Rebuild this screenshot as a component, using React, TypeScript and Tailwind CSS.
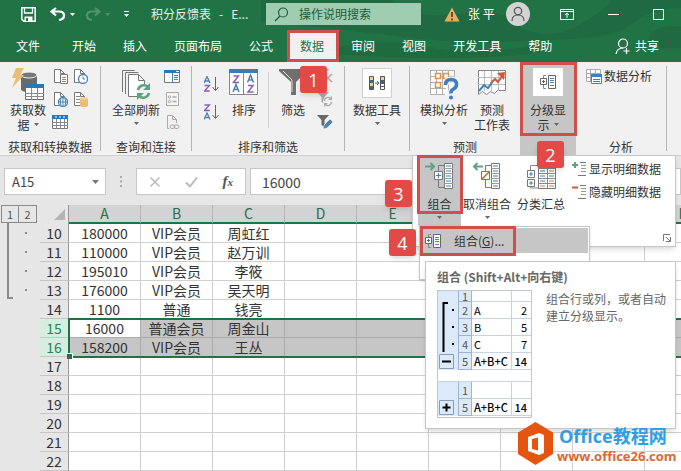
import React, { useState } from 'react';
import clsx from 'clsx';

const tabs = ['文件', '开始', '插入', '页面布局', '公式', '数据', '审阅', '视图', '开发工具', '帮助'];

const columns = ['A', 'B', 'C', 'D', 'E', 'F', 'G', 'H', 'I'];

const rows = [
  { id: 10, cells: ['180000', 'VIP会员', '周虹红'] },
  { id: 11, cells: ['110000', 'VIP会员', '赵万训'] },
  { id: 12, cells: ['195010', 'VIP会员', '李筱'] },
  { id: 13, cells: ['176000', 'VIP会员', '吴天明'] },
  { id: 14, cells: ['1100', '普通', '钱亮'] },
  { id: 15, cells: ['16000', '普通会员', '周金山'], selected: true },
  { id: 16, cells: ['158200', 'VIP会员', '王丛'], selected: true },
  { id: 17, cells: [] },
  { id: 18, cells: [] },
  { id: 19, cells: [] },
  { id: 20, cells: [] },
  { id: 21, cells: [] },
  { id: 22, cells: [] },
];

type IconProps = {
  w?: number;
  h?: number;
  children: React.ReactNode;
  className?: string;
};

function Icon({ w = 16, h = 16, children, className }: IconProps) {
  return (
    <svg
      width={w}
      height={h}
      viewBox={`0 0 ${w} ${h}`}
      fill="none"
      aria-hidden="true"
      className={clsx('shrink-0', className)}
    >
      {children}
    </svg>
  );
}

function Caret({ className = 'text-[#666]' }: { className?: string }) {
  return (
    <Icon w={5} h={3} className={className}>
      <path d="M0 0h5L2.5 3z" fill="currentColor" />
    </Icon>
  );
}

/* ---------- ribbon icons ---------- */

function GetDataIcon() {
  return (
    <Icon w={34} h={34}>
      <path d="M10 7v14c0 2 3 3 7 3s9-1 9-3V7z" fill="#6a6a6a" />
      <ellipse cx="18" cy="7" rx="8" ry="3" fill="#777" stroke="#f1f1f1" />
      <path d="M5 0h8L9 7h4L1 20l4-10H1z" fill="#e9bd76" />
      <path d="M14.5 16.5h18v15h-18z" fill="#fff" stroke="#666" />
      <path d="M14 16h19v4H14z" fill="#2e75b6" />
      <path d="M14 25.5h19M14 28.5h19M20.5 20v12M26.5 20v12" stroke="#8a8a8a" />
    </Icon>
  );
}

function PageIcon({ kind }: { kind: 'text' | 'clock' | 'globe' | 'database' }) {
  return (
    <Icon>
      <path d="M2.5 1.5h6l4 4v9h-10z" fill="#fff" stroke="#777" />
      <path d="M8.500 1.500v4h4" stroke="#777" />
      {kind === 'text' && (
        <>
          <path d="M8.500 6.500h7v9h-7z" fill="#fff" stroke="#777" />
          <path d="M10 9.500h4M10 11.500h4M10 13.500h4" stroke="#888" />
        </>
      )}
      {kind === 'clock' && (
        <>
          <circle cx="11" cy="11" r="4.500" fill="#fff" stroke="#4a82b8" strokeWidth="1.300" />
          <path d="M11 8.500V11h2" stroke="#4a82b8" />
        </>
      )}
      {kind === 'globe' && (
        <>
          <circle cx="11" cy="11" r="4.500" fill="#fff" stroke="#4a82b8" strokeWidth="1.300" />
          <path d="M6.500 11h9M11 6.500v9M9 7.500q-1.500 3.500 0 7M13 7.500q1.500 3.500 0 7" stroke="#4a82b8" />
        </>
      )}
      {kind === 'database' && (
        <>
          <path d="M4 5.500h4M4 8.500h4M4 11.500h4" stroke="#888" />
          <path d="M8 7.500v7c0 2 8 2 8 0v-7z" fill="#e9bd76" />
          <ellipse cx="12" cy="7.500" rx="4" ry="1.500" fill="#f1cf95" />
        </>
      )}
    </Icon>
  );
}

function TableIcon() {
  return (
    <Icon>
      <path d="M.5 1.500h15v13H.5z" fill="#fff" stroke="#777" />
      <path d="M0 1h16v4H0z" fill="#2e75b6" />
      <path d="M0 8.500h16M0 11.500h16M4.500 5v10M8.500 5v10M12.500 5v10" stroke="#888" />
      <path d="M3 3h2M7 3h2M11 3h2" stroke="#fff" />
    </Icon>
  );
}

function RefreshIcon() {
  return (
    <Icon w={30} h={32}>
      <path d="M1.500 24V2.500h12M4.500 26V4.500h13" stroke="#777" />
      <path d="M7.500 6.500h10l6 6v16h-16z" fill="#fff" stroke="#777" />
      <path d="M17.500 6.500v6h6" stroke="#777" />
      <circle cx="22.500" cy="23.500" r="7.500" fill="#f1f1f1" />
      <path d="M17 22a6 6 0 0 1 10-3M28 25a6 6 0 0 1-10 3" stroke="#5da282" strokeWidth="2.600" />
      <path d="M29 15v7h-7zM16 32v-7h7z" fill="#5da282" />
    </Icon>
  );
}

function QueryPaneIcon() {
  return (
    <Icon>
      <path d="M.5 2.500h15v12H.5z" fill="#fff" stroke="#777" />
      <path d="M0 2h16v3H0z" fill="#2e75b6" />
      <path d="M8.500 5v9M10 7.500h4M10 9.500h4M10 11.500h4" stroke="#4a82b8" />
      <path d="M12 3.500h3" stroke="#fff" />
    </Icon>
  );
}

function PropertiesIcon() {
  return (
    <Icon>
      <path d="M2.500 1.500h12v13h-12z" fill="#f4f4f4" stroke="#aaa" />
      <circle cx="5.500" cy="6" r="1.200" stroke="#aaa" />
      <circle cx="5.500" cy="10.500" r="1.200" stroke="#aaa" />
      <path d="M8.500 6h4M8.500 10.500h4" stroke="#aaa" strokeWidth="1.500" />
    </Icon>
  );
}

function LinkPageIcon() {
  return (
    <Icon>
      <path d="M5 14.500H3.500v-13h5l4 4V9M8.500 1.500v4h4" stroke="#aaa" />
      <rect x="6" y="11" width="5" height="3.500" rx="1.700" stroke="#aaa" />
      <rect x="10" y="11" width="5" height="3.500" rx="1.700" stroke="#aaa" />
    </Icon>
  );
}

/* the A and Z strokes of the sort icons */
function SortIcon({ desc }: { desc?: boolean }) {
  const a = <path d="M0 7L3 .5 6 7M1.200 5h3.600" stroke="#4a82b8" strokeWidth="1.300" />;
  const z = <path d="M.5 1h5L.5 6.500h5.200" stroke="#8b5fb0" strokeWidth="1.300" />;
  return (
    <Icon w={16} h={16}>
      <g>{desc ? z : a}</g>
      <g transform="translate(0 8.500)">{desc ? a : z}</g>
      <path d="M11.500 1v13M8.500 11l3 3.500 3-3.500" stroke="#666" />
    </Icon>
  );
}

function SortDialogIcon() {
  return (
    <Icon w={30} h={28}>
      <path d="M.5 2.500h14v24H.5zM14.500 2.500h14v24h-14z" fill="#fff" stroke="#888" />
      <path d="M0 1h29v4H0z" fill="#3f7cae" />
      <path d="M4.500 8h5l-5 6.500h5.500M19 17.500h5L19 24h5.500" stroke="#8b5fb0" strokeWidth="1.500" />
      <path d="M4 24l3-7.500 3 7.500M5 21.500h4M18.500 14.500l3-7.500 3 7.500M19.500 12h4" stroke="#4a82b8" strokeWidth="1.500" />
    </Icon>
  );
}

function FunnelIcon() {
  return (
    <Icon w={30} h={28}>
      <path d="M1 1h28v2L18 14v13h-5V14L1 3z" fill="#707070" />
      <path d="M5 3l9 9v12" stroke="#ddd" />
    </Icon>
  );
}

function SmallFunnelIcon({ kind }: { kind: 'clear' | 'reapply' | 'advanced' }) {
  const color = kind === 'advanced' ? '#666' : '#aaa';
  return (
    <Icon>
      <path d="M0 1h12L7.500 6v7l-3-2V6z" fill={color} />
      {kind === 'clear' && <path d="M7 6l8 8M15 6l-8 8" stroke="#aaa" strokeWidth="1.500" />}
      {kind === 'reapply' && (
        <>
          <circle cx="11" cy="10.500" r="5" fill="#f1f1f1" />
          <path d="M7.500 10a3.500 3.500 0 0 1 6-2.500M14.500 11a3.500 3.500 0 0 1-6 2.500" stroke="#aaa" strokeWidth="1.400" />
          <path d="M15 5v4h-4zM7 16v-4h4z" fill="#aaa" />
        </>
      )}
      {kind === 'advanced' && (
        <path d="M6 15l1-4 6-6 3 3-6 6z" fill="#4a82b8" stroke="#f1f1f1" strokeWidth=".6" />
      )}
    </Icon>
  );
}

function DataToolsIcon() {
  return (
    <Icon w={18} h={16}>
      <path d="M1.500 1.500h4v13h-4z" fill="#3f6785" stroke="#555" />
      <path d="M2 2h3v3H2zM2 8h3v3H2z" fill="#ecd28e" />
      <path d="M7 8h4M9 6l2 2-2 2" stroke="#3f6785" />
      <path d="M12.500 1.500h4v13h-4z" fill="#fff" stroke="#555" />
      <path d="M13 2h3v3h-3z" fill="#ecd28e" />
      <path d="M13 5h3v4h-3z" fill="#3f6785" />
      <path d="M12 11.500h5" stroke="#555" />
    </Icon>
  );
}

function WhatIfIcon() {
  return (
    <Icon w={30} h={32}>
      <path d="M1 2h25v24H1z" fill="#fff" />
      <path d="M1.500 2v24M7.500 2v24M13.500 2v24M19.500 2v24M25.500 2v12M1 2.500h25M1 8.500h25M1 14.500h25M1 20.500h16M1 26.500h15" stroke="#b0b0b0" />
      <path d="M6.500 5.500h5v5h-5zM14.500 5.500h5v5h-5zM6.500 14.500h5v5h-5z" fill="#fff" stroke="#dc9544" strokeWidth="1.500" />
      <path d="M16.500 17q0-5.500 5.500-5.500t5.500 5q0 3-3 4.500t-2.500 4.500" stroke="#f1f1f1" strokeWidth="6" />
      <path d="M16.500 17q0-5.500 5.500-5.500t5.500 5q0 3-3 4.500t-2.500 4.500" stroke="#3d80bd" strokeWidth="3.500" />
      <circle cx="22" cy="29.500" r="2" fill="#3d80bd" />
    </Icon>
  );
}

function ForecastIcon() {
  return (
    <Icon w={30} h={28}>
      <path d="M1.500 2.500h27v20l-8 0-3 3-4-2-4 3-4-3-4 3z" fill="#fff" stroke="#888" />
      <path d="M7.500 3v20M14.500 3v20M21.500 3v20M1 9.500h27M1 16.500h27" stroke="#bbb" />
      <path d="M2 23l5-6 4 3 5-7" stroke="#3d80bd" strokeWidth="2" />
      <path d="M14 15l4-4 3 3 5-7" stroke="#d0563c" strokeWidth="2" />
      <path d="M20 5l8-1-1 8z" fill="#d0563c" />
    </Icon>
  );
}

function OutlineIcon() {
  return (
    <Icon w={17} h={16}>
      <path d="M6 1.500H3.500V4M3.500 11v3.500H6" stroke="#888" />
      <path d="M.5 4.500h6v6h-6z" fill="#fff" stroke="#666" />
      <path d="M2 7.500h3M3.500 6v3" stroke="#3a6f9f" />
      <path d="M8.500 1.500h7v13h-7z" fill="#fff" stroke="#666" />
      <path d="M10 4.500h4M10 6.500h4M10 8.500h4M10 11.500h4" stroke="#4a82b8" />
    </Icon>
  );
}

function DataAnalysisIcon() {
  return (
    <Icon>
      <path d="M.5 1.500h14v12H.5z" fill="#fff" stroke="#aaa" />
      <path d="M0 5.500h15M0 9.500h6M4.500 1v12M9.500 1v4" stroke="#aaa" />
      <path d="M5.500 6.500h10v9h-10z" fill="#fff" stroke="#777" />
      <path d="M5 6h11v3H5z" fill="#3d80bd" />
      <path d="M7 11.500h7M7 13.500h7" stroke="#3d80bd" />
    </Icon>
  );
}

function GroupIcon({ ungroup }: { ungroup?: boolean }) {
  return (
    <Icon w={32} h={28}>
      <path d="M20 3.500h-5.500V9M14.500 18v7.500H20" stroke="#777" />
      <path d="M20.500 1.500h8v25h-8z" fill="#fff" stroke="#777" />
      <path d="M20 6.500h9M20 11.500h9M20 16.500h9M20 21.500h9" stroke="#999" />
      <path d="M22 4h5M22 9h5M22 14h5M22 19h5M22 24h5" stroke="#3d80bd" />
      {ungroup ? (
        <>
          <path d="M12 4.500H3M6.500 1L3 4.500 6.500 8" stroke="#5da282" strokeWidth="2" />
          <path d="M10.500 9.500h8v8h-8z" fill="#fff" stroke="#d0563c" />
          <path d="M11 17l7-7" stroke="#d0563c" strokeWidth="1.500" />
        </>
      ) : (
        <>
          <path d="M1 4.500h9M6.500 1L10 4.500 6.500 8" stroke="#5da282" strokeWidth="2" />
          <path d="M10.500 9.500h8v8h-8z" fill="#fff" stroke="#777" />
          <path d="M12 13.500h5M14.500 11v5" stroke="#3d80bd" />
        </>
      )}
    </Icon>
  );
}

function SubtotalIcon() {
  return (
    <Icon w={32} h={28}>
      <path d="M5.500 9V3.500H13M5.500 22v4H13" stroke="#888" />
      <path d="M13.500 1.500h17v25h-17z" fill="#fff" stroke="#777" />
      <path d="M13 6.500h17M13 11.500h17M13 16.500h17M13 21.500h17M22.500 1v26" stroke="#888" />
      <path d="M15 4h5M24 4h5M15 9h5M15 14h5M24 14h5M15 19h5" stroke="#3d80bd" />
      <path d="M24 9h5M15 24h5M24 24h5M24 19h5" stroke="#dc7c44" />
      <path d="M2.500 8.500h7v7h-7zM2.500 17.500h7v7h-7z" fill="#fff" stroke="#777" />
      <path d="M4 12h4M6 10v4M4 21h4M6 19v4" stroke="#3d80bd" />
    </Icon>
  );
}

function DetailIcon({ hide }: { hide?: boolean }) {
  return (
    <Icon>
      {hide ? (
        <path d="M1 3.500h6" stroke="#d0563c" strokeWidth="2" />
      ) : (
        <path d="M1 4h6M4 1v6" stroke="#5da282" strokeWidth="2" />
      )}
      <path d="M9 1.500h6M7 14.500h8" stroke="#777" />
      <path d="M10 4.500h5M10 7.500h5M10 10.500h5" stroke="#999" />
    </Icon>
  );
}

/* ---------- ribbon pieces ---------- */

type BigButtonProps = {
  icon: React.ReactNode;
  lines: string[];
  caret?: 'inline' | 'below';
  className?: string;
};

function BigButton({ icon, lines, caret, className }: BigButtonProps) {
  return (
    <button type="button" className={clsx('flex shrink-0 flex-col items-center leading-[15px]', className)}>
      <span className="flex h-[34px] items-start justify-center">{icon}</span>
      {lines.map((line, i) => (
        <span key={line} className="flex items-center gap-1 whitespace-nowrap">
          {line}
          {caret === 'inline' && i === lines.length - 1 && <Caret />}
        </span>
      ))}
      {caret === 'below' && (
        <span className="flex h-[13px] items-center">
          <Caret />
        </span>
      )}
    </button>
  );
}

type RibbonGroupProps = {
  label?: string;
  className?: string;
  children: React.ReactNode;
};

function RibbonGroup({ label, className, children }: RibbonGroupProps) {
  return (
    <div className={clsx('flex shrink-0 flex-col justify-between', className)}>
      <div className="flex items-start pt-0.5">{children}</div>
      {label && <div className="text-center leading-4">{label}</div>}
    </div>
  );
}

function IconButton({ label, children }: { label: string; children: React.ReactNode }) {
  return (
    <button type="button" aria-label={label} className="block">
      {children}
    </button>
  );
}

function Divider() {
  return <div className="mb-1 w-px shrink-0 bg-[#b5b5b5]" />;
}

function Ribbon() {
  return (
    <div className="flex h-[94px] overflow-hidden border-b border-[#d0d0d0] bg-[#f1f1f1] pt-1 text-[#333]">
      <RibbonGroup label="获取和转换数据" className="w-[100px]">
        <BigButton icon={<GetDataIcon />} lines={['获取数', '据']} caret="inline" className="ml-2 w-10" />
        <div className="ml-1 grid grid-cols-2 gap-x-1 gap-y-[7px]">
          <IconButton label="从文本"><PageIcon kind="text" /></IconButton>
          <IconButton label="最近使用的源"><PageIcon kind="clock" /></IconButton>
          <IconButton label="自网站"><PageIcon kind="globe" /></IconButton>
          <IconButton label="现有连接"><PageIcon kind="database" /></IconButton>
          <IconButton label="自表格"><TableIcon /></IconButton>
        </div>
      </RibbonGroup>
      <Divider />
      <RibbonGroup label="查询和连接" className="w-[90px]">
        <BigButton icon={<RefreshIcon />} lines={['全部刷新']} caret="below" className="ml-[11px] w-12" />
        <div className="ml-1 grid gap-y-[7px]">
          <IconButton label="查询"><QueryPaneIcon /></IconButton>
          <IconButton label="属性"><PropertiesIcon /></IconButton>
          <IconButton label="编辑链接"><LinkPageIcon /></IconButton>
        </div>
      </RibbonGroup>
      <Divider />
      <RibbonGroup label="排序和筛选" className="w-[152px]">
        <div className="flex gap-2 pl-3">
          <div className="grid content-start gap-y-3 pt-2">
            <IconButton label="升序"><SortIcon /></IconButton>
            <IconButton label="降序"><SortIcon desc /></IconButton>
          </div>
          <BigButton icon={<SortDialogIcon />} lines={['排序']} className="w-8" />
          <div className="mt-1 h-14 w-px bg-[#d0d0d0]" />
          <BigButton icon={<FunnelIcon />} lines={['筛选']} className="w-8" />
          <div className="grid gap-y-[7px]">
            <IconButton label="清除"><SmallFunnelIcon kind="clear" /></IconButton>
            <IconButton label="重新应用"><SmallFunnelIcon kind="reapply" /></IconButton>
            <IconButton label="高级"><SmallFunnelIcon kind="advanced" /></IconButton>
          </div>
        </div>
      </RibbonGroup>
      <Divider />
      <RibbonGroup className="w-16">
        <BigButton
          icon={
            <span className="flex size-[30px] items-center justify-center border border-[#d0d0d0] bg-white">
              <DataToolsIcon />
            </span>
          }
          lines={['数据工具']}
          caret="below"
          className="w-full"
        />
      </RibbonGroup>
      <Divider />
      <RibbonGroup label="预测" className="w-[110px]">
        <BigButton icon={<WhatIfIcon />} lines={['模拟分析']} caret="below" className="ml-[10px] w-12" />
        <BigButton icon={<ForecastIcon />} lines={['预测', '工作表']} className="ml-1.5 w-9" />
      </RibbonGroup>
      <RibbonGroup className="-mt-1 w-14 bg-[#c6c6c6] pt-1">
        <BigButton
          icon={
            <span className="flex h-7 w-[30px] items-center justify-center bg-white">
              <OutlineIcon />
            </span>
          }
          lines={['分级显', '示']}
          caret="inline"
          className="w-full"
        />
      </RibbonGroup>
      <RibbonGroup label="分析" className="w-[90px]">
        <button type="button" className="ml-[10px] flex items-center gap-0.5 leading-4">
          <DataAnalysisIcon />
          数据分析
        </button>
      </RibbonGroup>
      <Divider />
    </div>
  );
}

/* ---------- window header ---------- */

function TitleBar() {
  return (
    <div className="flex h-[30px] items-center pb-0.5 pl-[21px]">
      <button type="button" aria-label="保存">
        <Icon w={15} h={15}>
          <path d="M.8.800h13.400v13.400H2.800L.8 12.200z" stroke="#fff" strokeWidth="1.500" />
          <path d="M3.500 1v5h8V1" stroke="#fff" strokeWidth="1.300" />
          <path d="M3.500 9.500h8V14h-8z" fill="#fff" />
          <path d="M5 11h2v3H5z" fill="#217346" />
        </Icon>
      </button>
      <button type="button" aria-label="撤消" className="ml-3.5 flex items-center gap-1 text-white">
        <Icon w={16} h={14}>
          <path d="M6 1L1.500 4.500 6 8.500M2 4.500h7q5 0 5 4T9 13" stroke="currentColor" strokeWidth="2.200" />
        </Icon>
        <Caret className="text-white" />
      </button>
      <button type="button" aria-label="恢复" className="ml-2.5 flex items-center gap-1 text-[#4f936d]">
        <Icon w={16} h={14}>
          <path d="M10 1l4.500 3.500L10 8.500M14 4.500H7q-5 0-5 4T7 13" stroke="currentColor" strokeWidth="2.200" />
        </Icon>
        <Caret className="text-[#4f936d]" />
      </button>
      <button type="button" aria-label="自定义快速访问工具栏" className="ml-3.5 flex flex-col items-center gap-0.5 text-white">
        <span className="h-px w-[5px] bg-white" />
        <Caret className="text-white" />
      </button>
      <h1 className="ml-[22px] flex w-[115px] gap-2 whitespace-nowrap text-[#e2f0e8]">
        <span>积分反馈表</span>
        <span>-</span>
        <span>E...</span>
      </h1>
      <label className="flex h-[22px] w-[155px] items-center gap-2.5 bg-[#9fcdb1] pl-2">
        <Icon w={15} h={15}>
          <circle cx="9" cy="5.500" r="4.500" stroke="#1d5c3a" strokeWidth="1.200" />
          <path d="M6 9l-5 5" stroke="#1d5c3a" strokeWidth="1.300" />
        </Icon>
        <input
          type="text"
          aria-label="操作说明搜索"
          placeholder="操作说明搜索"
          className="w-full min-w-0 bg-transparent outline-none placeholder:text-[#1d5c3a]"
        />
      </label>
      <Icon w={16} h={15} className="ml-[23px]">
        <path d="M8 .5l7.500 14H.5z" fill="#e8ae58" />
        <path d="M8 5v5M8 11.500v2" stroke="#3c3c28" strokeWidth="1.600" />
      </Icon>
      <span className="ml-2 whitespace-nowrap text-white">张 平</span>
      <span className="ml-[11px] flex size-6 shrink-0 items-center justify-center rounded-full bg-[#d3d3d3]">
        <Icon w={14} h={16}>
          <circle cx="7" cy="5" r="3.700" stroke="#555" strokeWidth="1.200" />
          <path d="M1 15q0-6 6-6t6 6" stroke="#555" strokeWidth="1.200" />
        </Icon>
      </span>
      <div className="ml-auto flex items-center gap-[34px] pr-[17px]">
        <button type="button" aria-label="功能区显示选项">
          <Icon w={14} h={11}>
            <path d="M.5.500h13v10H.5zM.5 2.500h13M7 9V4M5 6l2-2 2 2" stroke="#fff" />
          </Icon>
        </button>
        <button type="button" aria-label="最小化">
          <Icon w={11} h={11}>
            <path d="M0 5.500h11" stroke="#fff" />
          </Icon>
        </button>
        <button type="button" aria-label="最大化">
          <Icon w={11} h={11}>
            <path d="M.5.500h10v10H.5z" stroke="#fff" />
          </Icon>
        </button>
      </div>
    </div>
  );
}

function Header() {
  const [active, setActive] = useState('数据');

  return (
    <header className="relative bg-[#217346]">
      <svg
        className="absolute inset-y-0 right-0 h-full w-[420px]"
        viewBox="0 0 420 62"
        preserveAspectRatio="none"
        aria-hidden="true"
      >
        <path d="M0 0h130q20 20 70 14t60 14q30 14 60-4t30-24h70v8q-30 0-46 14t-50 16-80 4-110-6T20 24 0 0z" fill="#1f6a40" />
        <path d="M408 26q-22 4-20 14t32 8V26z" fill="#1f6a40" />
        <path d="M70 50q40-14 90-4t110 0v8q-80 8-200 0z" fill="#1f6b40" />
      </svg>
      <div className="relative">
        <TitleBar />
        <nav className="flex h-8 items-stretch gap-px pl-[3px] text-white">
          {tabs.map((tab) => (
            <button
              key={tab}
              type="button"
              onClick={() => setActive(tab)}
              className={clsx(
                'shrink-0 px-[13px]',
                tab === '文件' && 'mr-[5px]',
                tab === active && 'bg-[#f1f1f1] text-[#217346]',
              )}
            >
              {tab}
            </button>
          ))}
          <button type="button" className="mr-[22px] ml-auto flex shrink-0 items-center gap-1">
            <Icon w={16} h={17}>
              <circle cx="8" cy="5.500" r="4.500" stroke="#fff" strokeWidth="1.200" />
              <path d="M1 16q1-6 7-6M8.500 13h6M11.500 10v6" stroke="#fff" strokeWidth="1.200" />
            </Icon>
            共享
          </button>
        </nav>
      </div>
    </header>
  );
}

/* ---------- sheet ---------- */

function FormulaBar() {
  return (
    <div className="flex items-center bg-[#e6e6e6] px-1 pt-3 pb-[10px] text-[#444]">
      <div className="flex h-[27px] w-[102px] shrink-0 items-center border border-[#c6c6c6] bg-white pr-1.5 pl-[7px]">
        <input aria-label="名称框" defaultValue="A15" className="w-full min-w-0 text-[13px] outline-none" />
        <Icon w={7} h={4}>
          <path d="M0 0h7L3.500 4z" fill="#777" />
        </Icon>
      </div>
      <Icon w={2} h={11} className="ml-3.5">
        <path d="M0 1h2M0 5.500h2M0 10h2" stroke="#aaa" strokeWidth="2" />
      </Icon>
      <div className="ml-3.5 flex h-[27px] w-[110px] shrink-0 items-center justify-between border border-[#c6c6c6] bg-white px-3">
        <button type="button" aria-label="取消">
          <Icon w={12} h={12}>
            <path d="M1.500 1.500l9 9M10.500 1.500l-9 9" stroke="#bbb" strokeWidth="1.500" />
          </Icon>
        </button>
        <button type="button" aria-label="输入">
          <Icon w={13} h={12}>
            <path d="M1 6.500l4 4L12 1.500" stroke="#bbb" strokeWidth="2" />
          </Icon>
        </button>
        <button type="button" className="font-['Liberation_Serif',serif] text-[15px] leading-4 font-bold text-[#555] italic">
          f<span className="text-[11px]">x</span>
        </button>
      </div>
      <input
        aria-label="编辑栏"
        defaultValue="16000"
        className="-mr-1 ml-1 h-[27px] min-w-0 flex-1 border border-[#c6c6c6] bg-white pl-[11px] text-[14px] outline-none"
      />
    </div>
  );
}

function OutlineGutter() {
  return (
    <div className="w-10 shrink-0 bg-[#e6e6e6] pl-px">
      <div className="flex text-[11px] leading-4 text-[#555]">
        <button type="button" className="size-[18px] border border-[#8a8a8a]">1</button>
        <button type="button" className="size-[18px] border border-l-0 border-[#8a8a8a]">2</button>
      </div>
      <Icon w={36} h={76}>
        <path d="M7 0v75h5" stroke="#8a8a8a" strokeWidth="2" />
        <path d="M24 10h2M24 29h2M24 48h2M24 67h2" stroke="#8a8a8a" strokeWidth="2" />
      </Icon>
    </div>
  );
}

function Sheet() {
  return (
    <div className="flex bg-white">
      <OutlineGutter />
      <div className="relative min-w-0 flex-1 overflow-x-clip">
        <table className="w-[677px] table-fixed border-separate border-spacing-0 text-center text-[#333]">
          <colgroup>
            <col className="w-[29px]" />
            {columns.map((c) => (
              <col key={c} className="w-[72px]" />
            ))}
          </colgroup>
          <thead>
            <tr className="text-[14px] leading-[17px] text-[#2f6b4c]">
              <th className="h-[19px] border-r border-[#999] bg-[#e6e6e6] p-0">
                <Icon w={11} h={11} className="ml-auto mr-[3px]">
                  <path d="M11 0v11H0z" fill="#b5b5b5" />
                </Icon>
              </th>
              {columns.map((c) => (
                <th key={c} className="h-[19px] border-r border-b-2 border-r-[#b5b5b5] border-b-[#217346] bg-[#d3d3d3] p-0 font-normal">
                  {c}
                </th>
              ))}
            </tr>
          </thead>
          <tbody>
            {rows.map((row) => (
              <tr key={row.id} className="text-[14px] leading-[18px]">
                <th
                  className={clsx(
                    'h-[19px] border-r border-b border-r-[#999] border-b-[#c6c6c6] p-0 font-normal',
                    row.selected ? 'bg-[#d3efdf] text-[#2f8055]' : 'bg-[#e6e6e6]',
                  )}
                >
                  {row.id}
                </th>
                {columns.map((c, i) => (
                  <td
                    key={c}
                    className={clsx(
                      'h-[19px] border-r border-b p-0 whitespace-nowrap',
                      row.selected ? 'border-[#aaa]' : 'border-[#d0d0d0]',
                      row.selected && !(row.id === 15 && i === 0) && 'bg-[#c6c6c6]',
                    )}
                  >
                    {row.cells[i]}
                  </td>
                ))}
              </tr>
            ))}
          </tbody>
        </table>
        {/* selection outline over rows 15 and 16 */}
        <div className="absolute top-[113px] -right-1 left-[28px] h-10 border-2 border-[#217346]">
          <span className="absolute -bottom-[3px] -left-[3px] size-[6px] border-t border-r border-white bg-[#217346]" />
        </div>
      </div>
    </div>
  );
}

/* ---------- floating layers ---------- */

function OutlinePanel() {
  return (
    <div className="absolute top-[155px] left-[412px] flex h-[92px] w-[264px] items-start border border-[#c6c6c6] bg-white pl-[5px] text-[#333] shadow-md">
      <BigButton icon={<GroupIcon />} lines={['组合']} caret="below" className="h-[70px] w-[43px] bg-[#c6c6c6] pt-1.5" />
      <BigButton icon={<GroupIcon ungroup />} lines={['取消组合']} caret="below" className="ml-0.5 w-12 pt-1.5" />
      <BigButton icon={<SubtotalIcon />} lines={['分类汇总']} className="ml-1.5 w-12 pt-1.5" />
      <div className="ml-1.5 flex flex-col gap-[7px] pt-[5px]">
        <button type="button" className="flex items-center gap-0.5 leading-4 whitespace-nowrap">
          <DetailIcon />
          显示明细数据
        </button>
        <button type="button" className="flex items-center gap-0.5 leading-4 whitespace-nowrap">
          <DetailIcon hide />
          隐藏明细数据
        </button>
      </div>
      <button type="button" aria-label="分级显示设置" className="absolute right-1 bottom-1">
        <Icon w={8} h={8}>
          <path d="M.5 7V.500H7M3 3l4 4M7.500 3v4.500H3" stroke="#777" />
        </Icon>
      </button>
    </div>
  );
}

function GroupMenu() {
  return (
    <div className="absolute top-[226px] left-[419px] h-[54px] w-[171px] border border-[#c6c6c6] bg-white p-px shadow-sm">
      <button type="button" className="flex h-[25px] w-full items-center gap-3 bg-[#c6c6c6] pl-1 text-[#333]">
        <OutlineIcon />
        <span>
          组合(<u>G</u>)...
        </span>
      </button>
    </div>
  );
}

const previewRows = [
  ['2', 'A', '2'],
  ['3', 'B', '5'],
  ['4', 'C', '7'],
  ['5', 'A+B+C', '14'],
];

function PreviewTable({ data, clipped }: { data: string[][]; clipped?: boolean }) {
  return (
    <table className="w-[73px] table-fixed border-separate border-spacing-0 font-['Noto_Sans_CJK_SC',sans-serif] text-[11px] leading-4 text-black">
      <colgroup>
        <col className="w-[14px]" />
        <col className="w-10" />
        <col />
      </colgroup>
      <tbody>
        <tr className={clipped ? 'leading-[10px]' : undefined}>
          <th className="border-x border-b border-[#9db4d2] bg-[#dce9f8] p-0 font-normal text-[#555]">1</th>
          <td className="border-r border-b border-[#c8d3e2]" />
          <td className="border-b border-[#c8d3e2]" />
        </tr>
        {data.map(([id, name, value]) => (
          <tr key={id} className={id === '5' ? 'font-medium' : undefined}>
            <th className="border-x border-b border-[#9db4d2] bg-[#dce9f8] p-0 font-normal text-[#555]">{id}</th>
            <td className="border-r border-b border-[#c8d3e2] p-0 pl-0.5">{name}</td>
            <td className="border-b border-[#c8d3e2] p-0 pr-1 text-right">{value}</td>
          </tr>
        ))}
      </tbody>
    </table>
  );
}

function Tooltip() {
  return (
    <div
      role="tooltip"
      className="absolute top-[261px] left-[425px] h-[168px] w-[251px] border border-[#c6c6c6] bg-white pt-[6px] pl-[11px] text-[#666] shadow-md"
    >
      <p className="leading-[17px] font-bold">组合 (Shift+Alt+向右键)</p>
      <div className="mt-[5px] flex gap-[14px]">
        <div className="w-[95px] shrink-0 border border-[#c0c6d0] pb-px">
          <div className="flex">
            <Icon w={20} h={79} className="bg-[#dce9f8]">
              <path d="M10 12H5.500v49" stroke="#000" strokeWidth="2" />
              <path d="M14 19h2M14 36h2M14 53h2" stroke="#000" strokeWidth="2" />
              <path d="M1.500 63.500h14v14h-14z" fill="#dce9f8" stroke="#8a9db8" />
              <path d="M4 70.500h9" stroke="#000" strokeWidth="2" />
            </Icon>
            <PreviewTable data={previewRows} clipped />
          </div>
          <div className="mt-[11px] flex border-t border-[#c8d3e2]">
            <Icon w={20} h={34} className="bg-[#dce9f8]">
              <path d="M1.500 18.500h14v14h-14z" fill="#dce9f8" stroke="#8a9db8" />
              <path d="M4.500 25.500h8M8.500 21.500v8" stroke="#000" strokeWidth="2" />
            </Icon>
            <PreviewTable data={previewRows.slice(3)} />
          </div>
        </div>
        <p className="leading-[17px]">
          组合行或列，或者自动
          <br />
          建立分级显示。
        </p>
      </div>
    </div>
  );
}

function Badge({ n, className }: { n: number; className: string }) {
  return (
    <span
      className={clsx(
        "absolute flex size-[27px] items-center justify-center rounded-[3px] bg-[#e34a45] font-['Open_Sans',sans-serif] text-[18px] leading-none text-white shadow-md",
        className,
      )}
    >
      {n}
    </span>
  );
}

function Frame({ className }: { className: string }) {
  return <div className={clsx('pointer-events-none absolute border-3 border-[#cf4f4b]', className)} />;
}

function Watermark() {
  return (
    <a
      href="#office26"
      className="absolute top-[422px] left-[518px] flex items-center gap-1 font-['Open_Sans','Noto_Sans_CJK_SC',sans-serif] font-bold whitespace-nowrap"
    >
      <Icon w={35} h={43}>
        <path d="M17.500 0L35 10.500v21.500L17.500 43 0 32V10.500z" fill="#e4560f" />
        <path fillRule="evenodd" d="M10 15l11-4 5 2v18l-5 2-11-4zM14 17v10l6 1.500V15.500z" fill="#fff" />
      </Icon>
      <span className="flex flex-col">
        <span className="pl-0.5 text-[18px] leading-6 text-[#2ba0e6]">Office教程网</span>
        <span className="text-[13px] leading-4 text-[#df672c]">www.office26.com</span>
      </span>
    </a>
  );
}

export default function App() {
  return (
    <div className="relative overflow-hidden bg-[#e6e6e6] font-['Noto_Sans_CJK_SC',sans-serif] text-[12px]">
      <Header />
      <Ribbon />
      <FormulaBar />
      <Sheet />

      <OutlinePanel />
      <GroupMenu />
      <Tooltip />
      <Watermark />

      <Frame className="top-[30px] left-[287px] h-8 w-[52px]" />
      <Frame className="top-[62px] left-[520px] h-[74px] w-[57px]" />
      <Frame className="top-[155px] left-[417px] h-[59px] w-[46px]" />
      <Frame className="top-[226px] left-[420px] h-[30px] w-24" />
      <Badge n={1} className="top-[66px] left-[300px]" />
      <Badge n={2} className="top-[141px] left-[537px]" />
      <Badge n={3} className="top-[180px] left-[385px]" />
      <Badge n={4} className="top-[229px] left-[389px]" />
    </div>
  );
}
